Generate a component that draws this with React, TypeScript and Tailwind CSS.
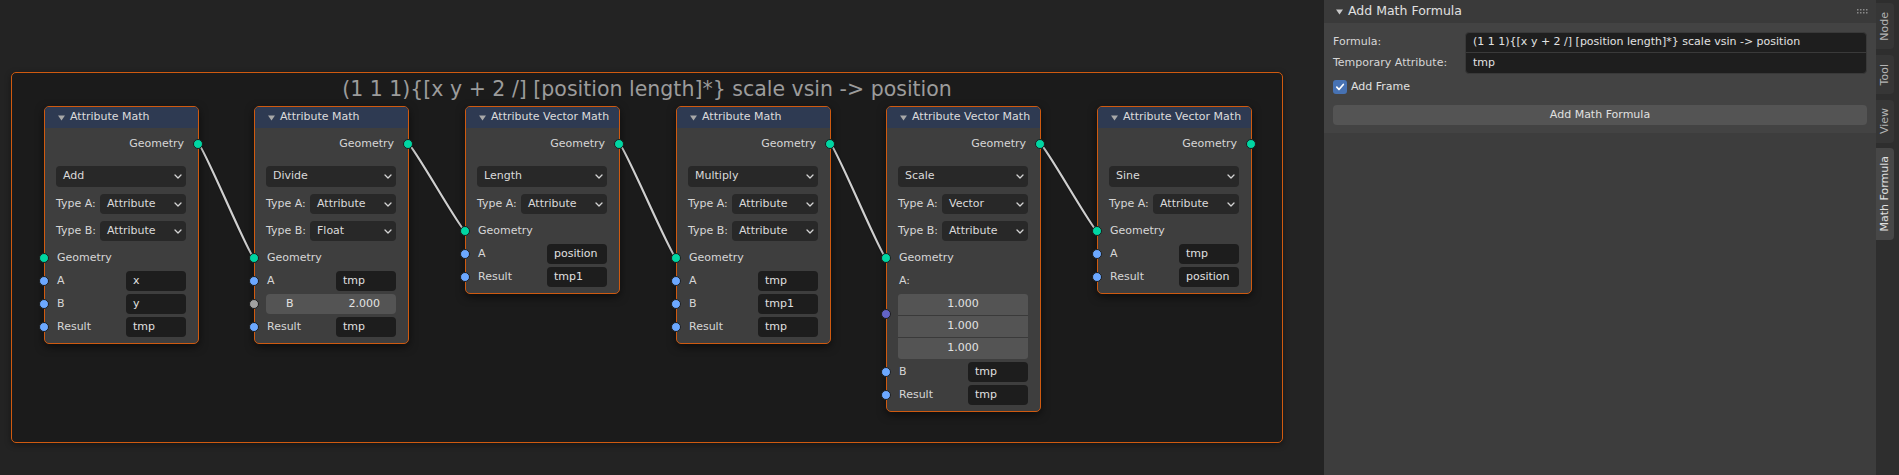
import React from 'react';

type SockKind = 'geo' | 'str' | 'float' | 'vec';

interface NodeInput {
    label: string;
    value: string;
    sock: SockKind;
    number?: boolean;
}

interface NodeData {
    title: string;
    pos: string;
    op: string;
    types: [string, string][];
    vectorA?: boolean;
    inputs: NodeInput[];
}

const SOCK: Record<SockKind, string> = {
    geo: 'bg-[#00d6a3]',
    str: 'bg-[#6ca8ff]',
    float: 'bg-[#a1a1a1]',
    vec: 'bg-[#6363c7]',
};

const NODES: NodeData[] = [
    {
        title: 'Attribute Math',
        pos: 'left-[44px]',
        op: 'Add',
        types: [['Type A:', 'Attribute'], ['Type B:', 'Attribute']],
        inputs: [
            { label: 'A', value: 'x', sock: 'str' },
            { label: 'B', value: 'y', sock: 'str' },
            { label: 'Result', value: 'tmp', sock: 'str' },
        ],
    },
    {
        title: 'Attribute Math',
        pos: 'left-[254px]',
        op: 'Divide',
        types: [['Type A:', 'Attribute'], ['Type B:', 'Float']],
        inputs: [
            { label: 'A', value: 'tmp', sock: 'str' },
            { label: 'B', value: '2.000', sock: 'float', number: true },
            { label: 'Result', value: 'tmp', sock: 'str' },
        ],
    },
    {
        title: 'Attribute Vector Math',
        pos: 'left-[465px]',
        op: 'Length',
        types: [['Type A:', 'Attribute']],
        inputs: [
            { label: 'A', value: 'position', sock: 'str' },
            { label: 'Result', value: 'tmp1', sock: 'str' },
        ],
    },
    {
        title: 'Attribute Math',
        pos: 'left-[676px]',
        op: 'Multiply',
        types: [['Type A:', 'Attribute'], ['Type B:', 'Attribute']],
        inputs: [
            { label: 'A', value: 'tmp', sock: 'str' },
            { label: 'B', value: 'tmp1', sock: 'str' },
            { label: 'Result', value: 'tmp', sock: 'str' },
        ],
    },
    {
        title: 'Attribute Vector Math',
        pos: 'left-[886px]',
        op: 'Scale',
        types: [['Type A:', 'Vector'], ['Type B:', 'Attribute']],
        vectorA: true,
        inputs: [
            { label: 'B', value: 'tmp', sock: 'str' },
            { label: 'Result', value: 'tmp', sock: 'str' },
        ],
    },
    {
        title: 'Attribute Vector Math',
        pos: 'left-[1097px]',
        op: 'Sine',
        types: [['Type A:', 'Attribute']],
        inputs: [
            { label: 'A', value: 'tmp', sock: 'str' },
            { label: 'Result', value: 'position', sock: 'str' },
        ],
    },
];

// link endpoints: output socket -> geometry input of the next node
const LINKS: [number, number, number, number][] = [
    [198.5, 144, 254, 258],
    [408.5, 144, 465, 231],
    [619.5, 144, 676, 258],
    [830.5, 144, 886, 258],
    [1040.5, 144, 1097, 231],
];

function Socket({ kind, side }: { kind: SockKind; side: 'l' | 'r' }) {
    return (
        <span
            className={`absolute top-1/2 h-[10px] w-[10px] -translate-y-1/2 rounded-full border border-[#1c1c1c] ${SOCK[kind]} ${
                side === 'l' ? 'left-[-17px]' : 'right-[-17px]'
            }`}
        />
    );
}

function Chevron() {
    return (
        <svg width="8" height="5" viewBox="0 0 8 5" className="shrink-0">
            <path d="M1 1l3 3 3-3" fill="none" stroke="#d4d4d4" strokeWidth="1.3" strokeLinecap="round" strokeLinejoin="round" />
        </svg>
    );
}

function Triangle({ color = '#a8a8a8' }: { color?: string }) {
    return (
        <svg width="7" height="6" viewBox="0 0 7 6" className="shrink-0">
            <path d="M0 0.5h7L3.5 5.5z" fill={color} />
        </svg>
    );
}

function Dropdown({ value, className }: { value: string; className: string }) {
    return (
        <div className={`flex items-center justify-between rounded-[4px] bg-[#282828] pl-[7px] pr-[4px] text-[#dadada] ${className}`}>
            <span>{value}</span>
            <Chevron />
        </div>
    );
}

function Node({ n }: { n: NodeData }) {
    return (
        <div
            className={`absolute top-[106px] ${n.pos} w-[155px] rounded-[5px] border border-[#cf5a10] bg-[#3e3e3e] text-[11px] text-[#d6d6d6] shadow-[0_3px_8px_rgba(0,0,0,0.55)]`}
        >
            {/* Header */}
            <div className="flex h-[21px] items-center gap-[5px] rounded-t-[4px] bg-[#2e3a52] pl-[13px] text-[#dcdcdc]">
                <Triangle />
                <span>{n.title}</span>
            </div>

            <div className="flex flex-col pb-[6px] pl-[11px] pr-[12px]">
                <div className="relative mt-[6px] flex h-[20px] items-center justify-end pr-[2px]">
                    Geometry
                    <Socket kind="geo" side="r" />
                </div>

                <Dropdown className="mt-[12px] h-[21px]" value={n.op} />

                {n.types.map(([l, v]) => (
                    <div key={l} className="mt-[7px] flex h-[20px] items-center">
                        <span className="w-[44px] shrink-0">{l}</span>
                        <Dropdown className="h-[20px] flex-1" value={v} />
                    </div>
                ))}

                <div className="relative mt-[7px] flex h-[20px] items-center pl-[1px]">
                    Geometry
                    <Socket kind="geo" side="l" />
                </div>

                {n.vectorA && (
                    <>
                        <div className="mt-[3px] flex h-[20px] items-center pl-[1px]">A:</div>
                        <div className="relative mt-[3px] flex flex-col gap-px rounded-[3px] bg-[#3a3a3a] text-[#e2e2e2]">
                            <span className="absolute left-[-17px] top-[15px] h-[10px] w-[10px] rounded-full border border-[#1c1c1c] bg-[#6363c7]" />
                            <div className="flex h-[21px] items-center justify-center rounded-t-[3px] bg-[#545454]">1.000</div>
                            <div className="flex h-[21px] items-center justify-center bg-[#545454]">1.000</div>
                            <div className="flex h-[21px] items-center justify-center rounded-b-[3px] bg-[#545454]">1.000</div>
                        </div>
                    </>
                )}

                {n.inputs.map((inp) => (
                    <div key={inp.label} className="relative mt-[3px] flex h-[20px] items-center">
                        <Socket kind={inp.sock} side="l" />
                        {inp.number ? (
                            <div className="flex h-[20px] w-full items-center justify-between rounded-[4px] bg-[#545454] pl-[20px] pr-[16px] text-[#e2e2e2]">
                                <span>{inp.label}</span>
                                <span>{inp.value}</span>
                            </div>
                        ) : (
                            <>
                                <span className="pl-[1px]">{inp.label}</span>
                                <div className="ml-auto flex h-[20px] w-[60px] items-center rounded-[4px] bg-[#1d1d1d] px-[7px] text-[#e0e0e0]">
                                    {inp.value}
                                </div>
                            </>
                        )}
                    </div>
                ))}
            </div>
        </div>
    );
}

function Editor() {
    return (
        <div className="relative h-[475px] w-[1324px] shrink-0 overflow-hidden bg-[#232323]">
            {/* Frame */}
            <div className="absolute left-[11px] top-[72px] h-[371px] w-[1272px] rounded-[5px] border border-[#cf5a10] bg-[#1b1b1b] shadow-[0_2px_6px_rgba(0,0,0,0.4)]">
                <div className="pt-[4px] text-center text-[20.5px] leading-[24px] text-[#9c9c9c]">
                    (1 1 1){'{'}[x y + 2 /] [position length]*{'}'} scale vsin -&gt; position
                </div>
            </div>

            {/* Links */}
            <svg className="pointer-events-none absolute inset-0" width="1324" height="475">
                {LINKS.map(([x1, y1, x2, y2], i) => {
                    const h = 5;
                    const d = `M${x1} ${y1} C${x1 + h} ${y1 + 2} ${x2 - h} ${y2 - 2} ${x2} ${y2}`;
                    return (
                        <g key={i}>
                            <path d={d} fill="none" stroke="#161616" strokeWidth="4" />
                            <path d={d} fill="none" stroke="#cfcfcf" strokeWidth="2.2" />
                        </g>
                    );
                })}
            </svg>

            {NODES.map((n, i) => (
                <Node key={i} n={n} />
            ))}
        </div>
    );
}

function DragHandle() {
    return (
        <svg width="11" height="5" viewBox="0 0 11 5">
            {[0, 3, 6, 9].map((x) =>
                [0, 3].map((y) => <rect key={`${x}-${y}`} x={x} y={y} width="1.5" height="1.5" fill="#8a8a8a" />)
            )}
        </svg>
    );
}

function Sidebar() {
    return (
        <div className="flex h-[475px] w-[575px] shrink-0">
            <div className="flex w-[552px] flex-col bg-[#3d3d3d]">
                {/* Panel header */}
                <div className="flex h-[23px] items-center bg-[#3a3a3a] pl-[12px] pr-[8px] text-[12.5px] text-[#e0e0e0]">
                    <Triangle color="#c8c8c8" />
                    <span className="ml-[5px]">Add Math Formula</span>
                    <span className="ml-auto">
                        <DragHandle />
                    </span>
                </div>

                {/* Panel body */}
                <div className="flex h-[110px] flex-col bg-[#434343] px-[9px] pt-[9px] text-[11px] text-[#d6d6d6]">
                    <div className="flex">
                        <div className="flex w-[132px] shrink-0 flex-col">
                            <div className="flex h-[21px] items-center">Formula:</div>
                            <div className="flex h-[21px] items-center">Temporary Attribute:</div>
                        </div>
                        <div className="flex flex-1 flex-col overflow-hidden rounded-[4px] border border-[#393939] bg-[#1e1e1e] text-[#e2e2e2]">
                            <div className="flex h-[20px] items-center border-b border-[#3a3a3a] pl-[7px]">
                                (1 1 1){'{'}[x y + 2 /] [position length]*{'}'} scale vsin -&gt; position
                            </div>
                            <div className="flex h-[20px] items-center pl-[7px]">tmp</div>
                        </div>
                    </div>

                    <div className="mt-[6px] flex h-[14px] items-center gap-[4px]">
                        <span className="flex h-[14px] w-[14px] items-center justify-center rounded-[3px] bg-[#4772b3]">
                            <svg width="10" height="10" viewBox="0 0 10 10">
                                <path d="M1.8 5.2l2.2 2.3 4.3-5" fill="none" stroke="#ffffff" strokeWidth="1.7" strokeLinecap="round" strokeLinejoin="round" />
                            </svg>
                        </span>
                        <span className="text-[#e0e0e0]">Add Frame</span>
                    </div>

                    <div className="mt-[11px] flex h-[20px] items-center justify-center rounded-[4px] bg-[#545454] text-[#e0e0e0]">
                        Add Math Formula
                    </div>
                </div>
            </div>

            {/* Tabs */}
            <div className="flex w-[23px] flex-col bg-[#2e2e2e] pt-[3px] text-[11px]">
                <div className="flex h-[46px] w-[18px] items-center justify-center rounded-r-[4px] bg-[#363636] text-[#b4b4b4]">
                    <span className="rotate-180 [writing-mode:vertical-rl]">Node</span>
                </div>
                <div className="mt-[6px] flex h-[39px] w-[18px] items-center justify-center rounded-r-[4px] bg-[#363636] text-[#b4b4b4]">
                    <span className="rotate-180 [writing-mode:vertical-rl]">Tool</span>
                </div>
                <div className="mt-[6px] flex h-[43px] w-[18px] items-center justify-center rounded-r-[4px] bg-[#363636] text-[#b4b4b4]">
                    <span className="rotate-180 [writing-mode:vertical-rl]">View</span>
                </div>
                <div className="mt-[5px] flex h-[92px] w-[18px] items-center justify-center rounded-r-[4px] bg-[#474747] text-[#e0e0e0]">
                    <span className="rotate-180 [writing-mode:vertical-rl]">Math Formula</span>
                </div>
            </div>
        </div>
    );
}

export default function App() {
    return (
        <div className="flex h-[475px] w-[1899px] overflow-hidden font-['DejaVu_Sans',sans-serif]">
            <Editor />
            <Sidebar />
        </div>
    );
}
